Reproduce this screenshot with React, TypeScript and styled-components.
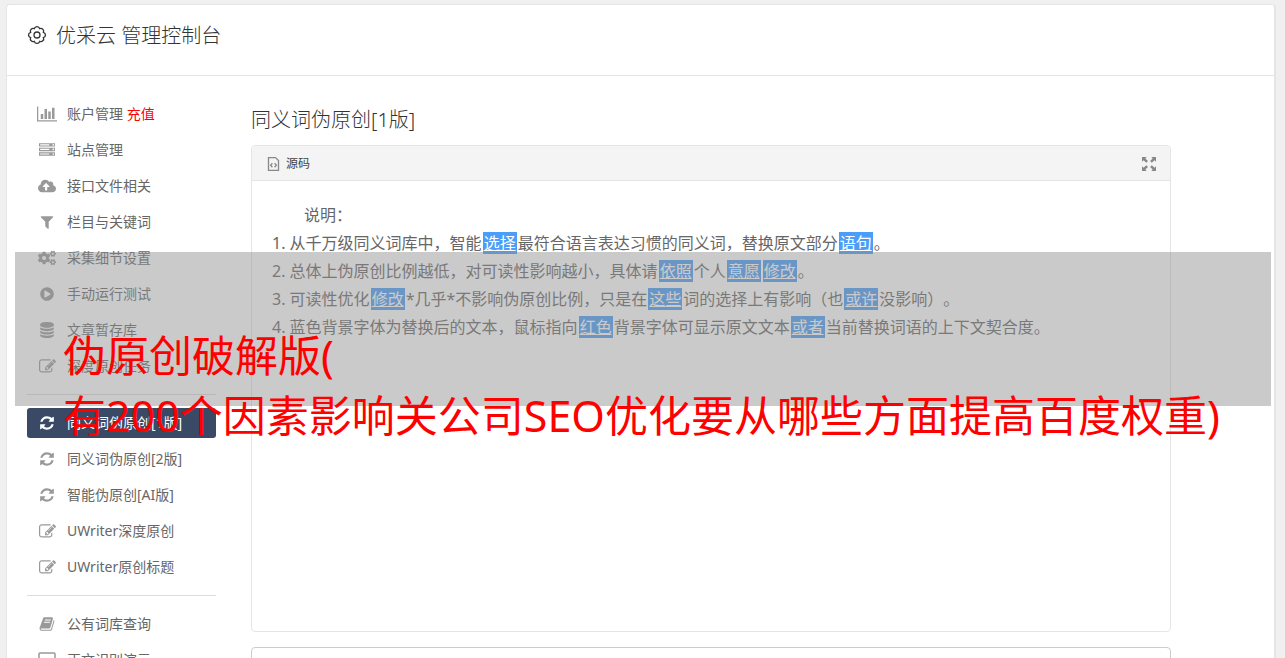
import React from "react";
import styled, { createGlobalStyle, css } from "styled-components";
import { FaCloudUploadAlt, FaCogs, FaPlayCircle } from "react-icons/fa";

const GlobalStyle = createGlobalStyle`
  *, *::before, *::after { box-sizing: border-box; }
  body {
    margin: 0;
    background: #f0f0f0;
    color: #666;
    font-family: "Noto Sans", "Noto Sans CJK SC", sans-serif;
    font-size: 14px;
    text-spacing-trim: space-all;
  }
  h1, h2, p, ol, ul { margin: 0; padding: 0; font-weight: 400; }
  ol, ul { list-style: none; }
`;

const Page = styled.div`
  position: relative;
  display: flex;
  flex-direction: column;
  height: 100vh;
  padding: 4px 9px 0 6px;
  overflow: hidden;
`;

const Card = styled.div`
  flex: 1 0 auto;
  background: #fff;
  border: 1px solid #e5e5e5;
  border-right-width: 2px;
  border-radius: 4px 4px 0 0;
`;

const CardHeader = styled.header`
  display: flex;
  align-items: flex-start;
  gap: 9px;
  height: 71px;
  padding: 17px 20px;
  border-bottom: 1px solid #e5e5e5;
  color: #333;

  svg { margin-top: 3px; }
`;

const Title = styled.h1`
  font-size: 20px;
  font-weight: 300;
  line-height: 28px;
`;

const Columns = styled.div`
  display: flex;
  align-items: flex-start;
  gap: 35px;
  padding: 23px 103px 0 20px;
`;

const Sidebar = styled.nav`
  flex: none;
  width: 189px;
`;

const NavGroup = styled.ul`
  display: flex;
  flex-direction: column;
  gap: 6px;

  & + & {
    margin-top: 13px;
    padding-top: 13px;
    border-top: 1px solid #ddd;
  }
`;

const NavLink = styled.a<{ $active?: boolean }>`
  display: flex;
  align-items: center;
  gap: 10px;
  height: 30px;
  padding: 0 10px;
  border-radius: 3px;
  line-height: 20px;
  white-space: nowrap;
  color: #666;
  text-decoration: none;
  ${(p) => p.$active && css`
    background: #3a4a66;
    color: #fff;
  `}
`;

const IconSlot = styled.span<{ $active?: boolean }>`
  display: flex;
  justify-content: center;
  flex: none;
  width: 20px;
  color: ${(p) => (p.$active ? "#fff" : "#999")};
`;

const Recharge = styled.span`
  color: #f00;
`;

const Main = styled.main`
  flex: 1;
  min-width: 0;
`;

const SectionTitle = styled.h2`
  padding: 7px 0 11px;
  font-size: 20px;
  font-weight: 300;
  line-height: 28px;
  color: #333;
`;

const Panel = styled.section`
  border: 1px solid #e5e5e5;
  border-radius: 4px;
`;

const PanelHeader = styled.div`
  display: flex;
  align-items: center;
  justify-content: space-between;
  height: 35px;
  padding: 2px 14px 0 15px;
  background: #f4f4f4;
  border-bottom: 1px solid #e5e5e5;
  border-radius: 3px 3px 0 0;
`;

const ToolButton = styled.button`
  display: flex;
  align-items: center;
  gap: 6px;
  padding: 0;
  border: 0;
  background: none;
  font: inherit;
  font-size: 12px;
  line-height: 20px;
  color: #444;

  svg { color: #888; }
`;

const PanelBody = styled.div`
  min-height: 450px;
  padding: 20px;
  font-size: 16px;
  line-height: 28px;
`;

const Intro = styled.p`
  text-indent: 2em;
`;

const Swapped = styled.a`
  margin: 0 1px;
  padding: 0 1px;
  background: #4a9df8;
  color: #fff;
  text-decoration: underline;
`;

const Editor = styled.textarea`
  display: block;
  width: 100%;
  height: 200px;
  margin-top: 15px;
  border: 1px solid #ccc;
  border-radius: 4px;
  background: #fff;
  resize: none;
`;

const Banner = styled.div`
  position: absolute;
  top: 252px;
  left: 15px;
  right: 14px;
  height: 154px;
  padding: 74px 0 0 48px;
  background: rgba(143, 143, 143, 0.47);
  color: #f00;
  font-size: 43px;
  line-height: 60px;
  white-space: nowrap;
`;

type GlyphProps = { d: string; width?: number; box?: string };

const Glyph = ({ d, width = 18, box = "0 0 1792 1792" }: GlyphProps) => (
  <svg width={width} height={width === 20 ? 18 : width} viewBox={box} fill="currentColor" aria-hidden="true">
    <path d={d} />
  </svg>
);

const paths = {
  chart: "M640 896v512h-256v-512h256zm384-512v1024h-256v-1024h256zm1024 1152v128h-2048v-1536h128v1408h1920zm-640-896v768h-256v-768h256zm384-384v1152h-256v-1152h256z",
  server: "M128 1408h1024v-128h-1024v128zm0-512h1024v-128h-1024v128zm1568 448q0-40-28-68t-68-28-68 28-28 68 28 68 68 28 68-28 28-68zm-1568-960h1024v-128h-1024v128zm1568 448q0-40-28-68t-68-28-68 28-28 68 28 68 68 28 68-28 28-68zm0-512q0-40-28-68t-68-28-68 28-28 68 28 68 68 28 68-28 28-68zm96 832v384h-1792v-384h1792zm0-512v384h-1792v-384h1792zm0-512v384h-1792v-384h1792z",
  filter: "M1595 295q17 41-14 70l-493 493v742q0 42-39 59-13 5-25 5-27 0-45-19l-256-256q-19-19-19-45v-486l-493-493q-31-29-14-70 17-39 59-39h1280q42 0 59 39z",
  database: "M896 768q237 0 443-43t325-127v170q0 69-103 128t-280 93.5-385 34.5-385-34.5-280-93.5-103-128v-170q119 84 325 127t443 43zm0 768q237 0 443-43t325-127v170q0 69-103 128t-280 93.5-385 34.5-385-34.5-280-93.5-103-128v-170q119 84 325 127t443 43zm0-384q237 0 443-43t325-127v170q0 69-103 128t-280 93.5-385 34.5-385-34.5-280-93.5-103-128v-170q119 84 325 127t443 43zm0-1152q208 0 385 34.5t280 93.5 103 128v128q0 69-103 128t-280 93.5-385 34.5-385-34.5-280-93.5-103-128v-128q0-69 103-128t280-93.5 385-34.5z",
  edit: "M888 1184l116-116-152-152-116 116v56h96v96h56zm440-720q-16-16-33 1l-350 350q-17 17-1 33t33-1l350-350q17-17 1-33zm80 594v190q0 119-84.5 203.5t-203.5 84.5h-832q-119 0-203.5-84.5t-84.5-203.5v-832q0-119 84.5-203.5t203.5-84.5h832q63 0 117 25 15 7 18 23 3 17-9 29l-49 49q-14 14-32 8-23-6-45-6h-832q-66 0-113 47t-47 113v832q0 66 47 113t113 47h832q66 0 113-47t47-113v-126q0-13 9-22l64-64q15-15 35-7t20 29zm-96-738l288 288-672 672h-288v-288zm444 132l-92 92-288-288 92-92q28-28 68-28t68 28l152 152q28 28 28 68t-28 68z",
  refresh: "M1639 1056q0 5-1 7-64 268-268 434.5t-478 166.5q-146 0-282.5-55t-243.5-157l-129 129q-19 19-45 19t-45-19-19-45v-448q0-26 19-45t45-19h448q26 0 45 19t19 45-19 45l-137 137q71 66 161 102t187 36q134 0 250-65t186-179q11-17 53-117 8-23 30-23h192q13 0 22.5 9.5t9.5 22.5zm25-800v448q0 26-19 45t-45 19h-448q-26 0-45-19t-19-45 19-45l138-138q-148-137-349-137-134 0-250 65t-186 179q-11 17-53 117-8 23-30 23h-199q-13 0-22.5-9.5t-9.5-22.5v-7q65-268 270-434.5t480-166.5q146 0 284 55.5t245 156.5l130-129q19-19 45-19t45 19 19 45z",
  book: "M1703 478q40 57 18 129l-275 906q-19 64-76.5 107.5t-122.5 43.5h-923q-77 0-148.5-53.5t-99.5-131.5q-24-67-2-127 0-4 3-27t4-37q1-8-3-21.5t-3-19.5q2-11 8-21t16.5-23.5 16.5-23.5q23-38 45-91.5t30-91.5q3-10 .5-30t-.5-28q3-11 17-28t17-23q21-36 42-92t25-90q1-9-2.5-32t.5-28q4-13 22-30.5t22-22.5q19-26 42.5-84.5t27.5-96.5q1-8-3-25.5t-2-26.5q2-8 9-18t18-23 17-21q8-12 16.5-30.5t15-35 16-36 19.5-32 26.5-23.5 36-11.5 47.5 5.5l-1 3q38-9 51-9h761q74 0 114 56t18 130l-274 906q-36 119-71.5 153.5t-128.5 34.5h-869q-27 0-38 15-11 16-1 43 24 70 144 70h923q29 0 56-15.5t35-41.5l300-987q7-22 5-57 38 15 59 43zm-1064 2q-4 13 2 22.5t20 9.5h608q13 0 25.5-9.5t16.5-22.5l21-64q4-13-2-22.5t-20-9.5h-608q-13 0-25.5 9.5t-16.5 22.5zm-83 256q-4 13 2 22.5t20 9.5h608q13 0 25.5-9.5t16.5-22.5l21-64q4-13-2-22.5t-20-9.5h-608q-13 0-25.5 9.5t-16.5 22.5z",
};

const GearIcon = () => (
  <svg width="20" height="20" viewBox="0 0 20 20" fill="none" stroke="currentColor" strokeWidth="1.3" aria-hidden="true">
    <path d="M16.4 7.3A2.8 2.8 0 0 1 16.4 12.7A2.8 2.8 0 0 1 12.7 16.4A2.8 2.8 0 0 1 7.3 16.4A2.8 2.8 0 0 1 3.6 12.7A2.8 2.8 0 0 1 3.6 7.3A2.8 2.8 0 0 1 7.3 3.6A2.8 2.8 0 0 1 12.7 3.6A2.8 2.8 0 0 1 16.4 7.3Z" />
    <circle cx="10" cy="10" r="3" />
  </svg>
);

const ScreenIcon = () => (
  <svg width="18" height="16" viewBox="0 0 18 16" fill="none" stroke="currentColor" strokeWidth="1.5" aria-hidden="true">
    <rect x="1" y="1" width="16" height="11" rx="1" />
    <path d="M5 15h8" />
  </svg>
);

const SourceIcon = () => (
  <svg width="13" height="16" viewBox="0 0 13 16" fill="none" stroke="currentColor" strokeWidth="1.3" aria-hidden="true">
    <path d="M1.5 1.6h7l3 3v9.8h-10z" />
    <path d="M5.4 7.2L3.6 9.2l1.8 2M7.6 7.2l1.8 2-1.8 2" />
  </svg>
);

const ExpandIcon = () => (
  <svg width="14" height="14" viewBox="0 0 15 15" fill="currentColor" aria-hidden="true">
    <path d="M0 0h5L3.6 1.6 6.4 4.4 4.6 6.2 1.7 3.4 0 5zM15 0v5l-1.6-1.6-2.9 2.8-1.8-1.8 2.7-2.8L10 0zM0 15v-5l1.7 1.6 2.9-2.8 1.8 1.8-2.8 2.8L5 15zM15 15h-5l1.4-1.6-2.7-2.8 1.8-1.8 2.9 2.8L15 10z" />
  </svg>
);

type Item = { label: string; extra?: string; icon: React.ReactNode; active?: boolean };

const groups: Item[][] = [
  [
    { label: "账户管理", extra: "充值", icon: <Glyph d={paths.chart} width={20} box="0 0 2048 1792" /> },
    { label: "站点管理", icon: <Glyph d={paths.server} width={16} /> },
    { label: "接口文件相关", icon: <FaCloudUploadAlt size={18} /> },
    { label: "栏目与关键词", icon: <Glyph d={paths.filter} width={16} /> },
    { label: "采集细节设置", icon: <FaCogs size={18} /> },
    { label: "手动运行测试", icon: <FaPlayCircle size={14} /> },
    { label: "文章暂存库", icon: <Glyph d={paths.database} width={16} /> },
    { label: "深度原创任务", icon: <Glyph d={paths.edit} width={17} /> },
  ],
  [
    { label: "同义词伪原创[1版]", icon: <Glyph d={paths.refresh} width={16} />, active: true },
    { label: "同义词伪原创[2版]", icon: <Glyph d={paths.refresh} width={16} /> },
    { label: "智能伪原创[AI版]", icon: <Glyph d={paths.refresh} width={16} /> },
    { label: "UWriter深度原创", icon: <Glyph d={paths.edit} width={17} /> },
    { label: "UWriter原创标题", icon: <Glyph d={paths.edit} width={17} /> },
  ],
  [
    { label: "公有词库查询", icon: <Glyph d={paths.book} width={16} /> },
    { label: "正文识别演示", icon: <ScreenIcon /> },
  ],
];

/* Words in square brackets are the ones the rewriter has replaced. */
const notes = [
  "从千万级同义词库中，智能[选择]最符合语言表达习惯的同义词，替换原文部分[语句]。",
  "总体上伪原创比例越低，对可读性影响越小，具体请[依照]个人[意愿][修改]。",
  "可读性优化[修改]*几乎*不影响伪原创比例，只是在[这些]词的选择上有影响（也[或许]没影响）。",
  "蓝色背景字体为替换后的文本，鼠标指向[红色]背景字体可显示原文文本[或者]当前替换词语的上下文契合度。",
];

const renderNote = (note: string) =>
  note.split(/(\[[^\]]+\])/).filter(Boolean).map((part, i) =>
    part.startsWith("[") ? <Swapped key={i} href="#">{part.slice(1, -1)}</Swapped> : part
  );

export default function App() {
  return (
    <>
      <GlobalStyle />
      <Page>
        <Card>
          <CardHeader>
            <GearIcon />
            <Title>优采云 管理控制台</Title>
          </CardHeader>
          <Columns>
            <Sidebar>
              {groups.map((group, g) => (
                <NavGroup key={g}>
                  {group.map((item) => (
                    <li key={item.label}>
                      <NavLink href="#" $active={item.active}>
                        <IconSlot $active={item.active}>{item.icon}</IconSlot>
                        <span>
                          {item.label}
                          {item.extra && <> <Recharge>{item.extra}</Recharge></>}
                        </span>
                      </NavLink>
                    </li>
                  ))}
                </NavGroup>
              ))}
            </Sidebar>
            <Main>
              <SectionTitle>同义词伪原创[1版]</SectionTitle>
              <Panel>
                <PanelHeader>
                  <ToolButton type="button"><SourceIcon />源码</ToolButton>
                  <ToolButton type="button" aria-label="全屏"><ExpandIcon /></ToolButton>
                </PanelHeader>
                <PanelBody>
                  <Intro>说明：</Intro>
                  <ol>
                    {notes.map((note, i) => (
                      <li key={note}>{`${i + 1}. `}{renderNote(note)}</li>
                    ))}
                  </ol>
                </PanelBody>
              </Panel>
              <Editor aria-label="原文" />
            </Main>
          </Columns>
        </Card>
        <Banner>
          <p>伪原创破解版(</p>
          <p>有200个因素影响关公司SEO优化要从哪些方面提高百度权重)</p>
        </Banner>
      </Page>
    </>
  );
}
